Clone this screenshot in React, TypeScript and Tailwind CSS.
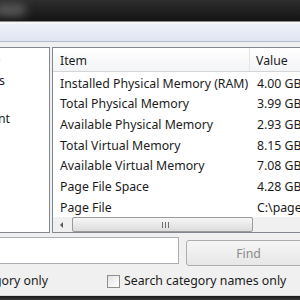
import React from "react";

const rows = [
  { item: "Installed Physical Memory (RAM)", value: "4.00 GB" },
  { item: "Total Physical Memory", value: "3.99 GB" },
  { item: "Available Physical Memory", value: "2.93 GB" },
  { item: "Total Virtual Memory", value: "8.15 GB" },
  { item: "Available Virtual Memory", value: "7.08 GB" },
  { item: "Page File Space", value: "4.28 GB" },
  { item: "Page File", value: "C:\\pagefile.sys" },
];

const treeItems = [
  { label: "System Summary", end: "w-[0px]" },
  { label: "Hardware Resources", end: "w-[5px]" },
  { label: "Components", end: "w-[0px]" },
  { label: "Software Environment", end: "w-[10px]" },
];

export default function App() {
  return (
    <div className="w-[300px] h-[300px] overflow-hidden flex flex-col bg-[#f0f0f0] text-[12.3px] text-[#1b1b1b] font-['Noto_Sans','Liberation_Sans',sans-serif]">
      {/* title bar */}
      <div className="h-[21px] shrink-0 bg-gradient-to-b from-[#2e2e2e] to-[#141414] relative overflow-hidden">
        <div className="absolute left-[-6px] top-[4px] w-[32px] h-[12px] rounded-full bg-[#5a5a5a] blur-[5px]" />
      </div>
      <div className="h-[1px] shrink-0 bg-[#8a8a8a]" />
      <div className="h-[2px] shrink-0 bg-[#f7f7f7]" />
      {/* menu band */}
      <div className="h-[17px] shrink-0 bg-gradient-to-b from-[#eef1f9] to-[#dfe4f1]" />
      <div className="h-[1px] shrink-0 bg-[#b4bac8]" />
      <div className="h-[5px] shrink-0" />

      {/* panels */}
      <div className="h-[186px] shrink-0 flex gap-[2px]">
        <div className="w-[50px] shrink-0 bg-white border border-l-0 border-[#828790] overflow-hidden flex flex-col pt-[5px]">
          {treeItems.map((t) => (
            <div key={t.label} className={`${t.end} h-[19px] flex justify-end items-center whitespace-nowrap leading-none`}>
              {t.label}
            </div>
          ))}
        </div>
        <div className="w-[270px] shrink-0 bg-white border border-r-0 border-[#828790] overflow-hidden flex flex-col">
          <div className="h-[24px] shrink-0 flex bg-gradient-to-b from-[#ffffff] to-[#f3f4f6] border-b border-[#d5d5d5]">
            <div className="w-[197px] shrink-0 pl-[7px] pt-[3px] flex items-center border-r border-[#e3e5e8]">Item</div>
            <div className="pl-[6px] pt-[3px] flex items-center">Value</div>
          </div>
          <div className="flex-1 flex flex-col">
            {rows.map((r) => (
              <div key={r.item} className="h-[20.7px] pt-[3px] flex items-center whitespace-nowrap">
                <div className="w-[197px] shrink-0 pl-[7px]">{r.item}</div>
                <div className="pl-[7px]">{r.value}</div>
              </div>
            ))}
          </div>
          {/* horizontal scrollbar */}
          <div className="h-[16px] shrink-0 flex items-center bg-[#f0f0f0] pl-[5px]">
            <svg width="8" height="8" viewBox="0 0 8 8" className="shrink-0">
              <path d="M5 1 L2 4 L5 7 Z" fill="#5a5a5a" />
            </svg>
            <div className="ml-[6px] w-[181px] h-[15px] rounded-[2px] border border-[#9b9b9b] bg-gradient-to-b from-[#f6f6f6] to-[#dcdcdc] flex items-center justify-center">
              <div className="flex gap-[2px] ml-[6px]">
                <div className="w-[1px] h-[6px] bg-[#6f6f6f]" />
                <div className="w-[1px] h-[6px] bg-[#6f6f6f]" />
                <div className="w-[1px] h-[6px] bg-[#6f6f6f]" />
              </div>
            </div>
          </div>
        </div>
      </div>

      <div className="h-[4px] shrink-0" />

      {/* find row */}
      <div className="h-[30px] shrink-0 flex gap-[7px]">
        <div className="w-[179px] h-[27px] shrink-0 bg-white border border-l-0 border-[#abadb3]" />
        <button
          type="button"
          className="mt-[3px] w-[125px] h-[26px] shrink-0 rounded-[3px] border border-[#adadad] bg-gradient-to-b from-[#f6f6f6] to-[#e7e7e7] text-[#8b8b8b] pt-[3px] flex items-center justify-center"
        >
          Find
        </button>
      </div>

      {/* checkboxes */}
      <div className="h-[28px] shrink-0 flex items-center">
        <div className="w-[48px] shrink-0 flex justify-end whitespace-nowrap">Search selected category only</div>
        <div className="ml-[59px] w-[13px] h-[13px] shrink-0 border border-[#8f8f8f] bg-gradient-to-br from-[#e4e4e4] to-[#ffffff]" />
        <div className="ml-[4px] whitespace-nowrap">Search category names only</div>
      </div>

      {/* window frame bottom */}
      <div className="h-[1px] shrink-0 bg-[#d9d9d9]" />
      <div className="flex-1 bg-gradient-to-b from-[#1a1a1a] to-[#3a3a3a]" />
    </div>
  );
}
